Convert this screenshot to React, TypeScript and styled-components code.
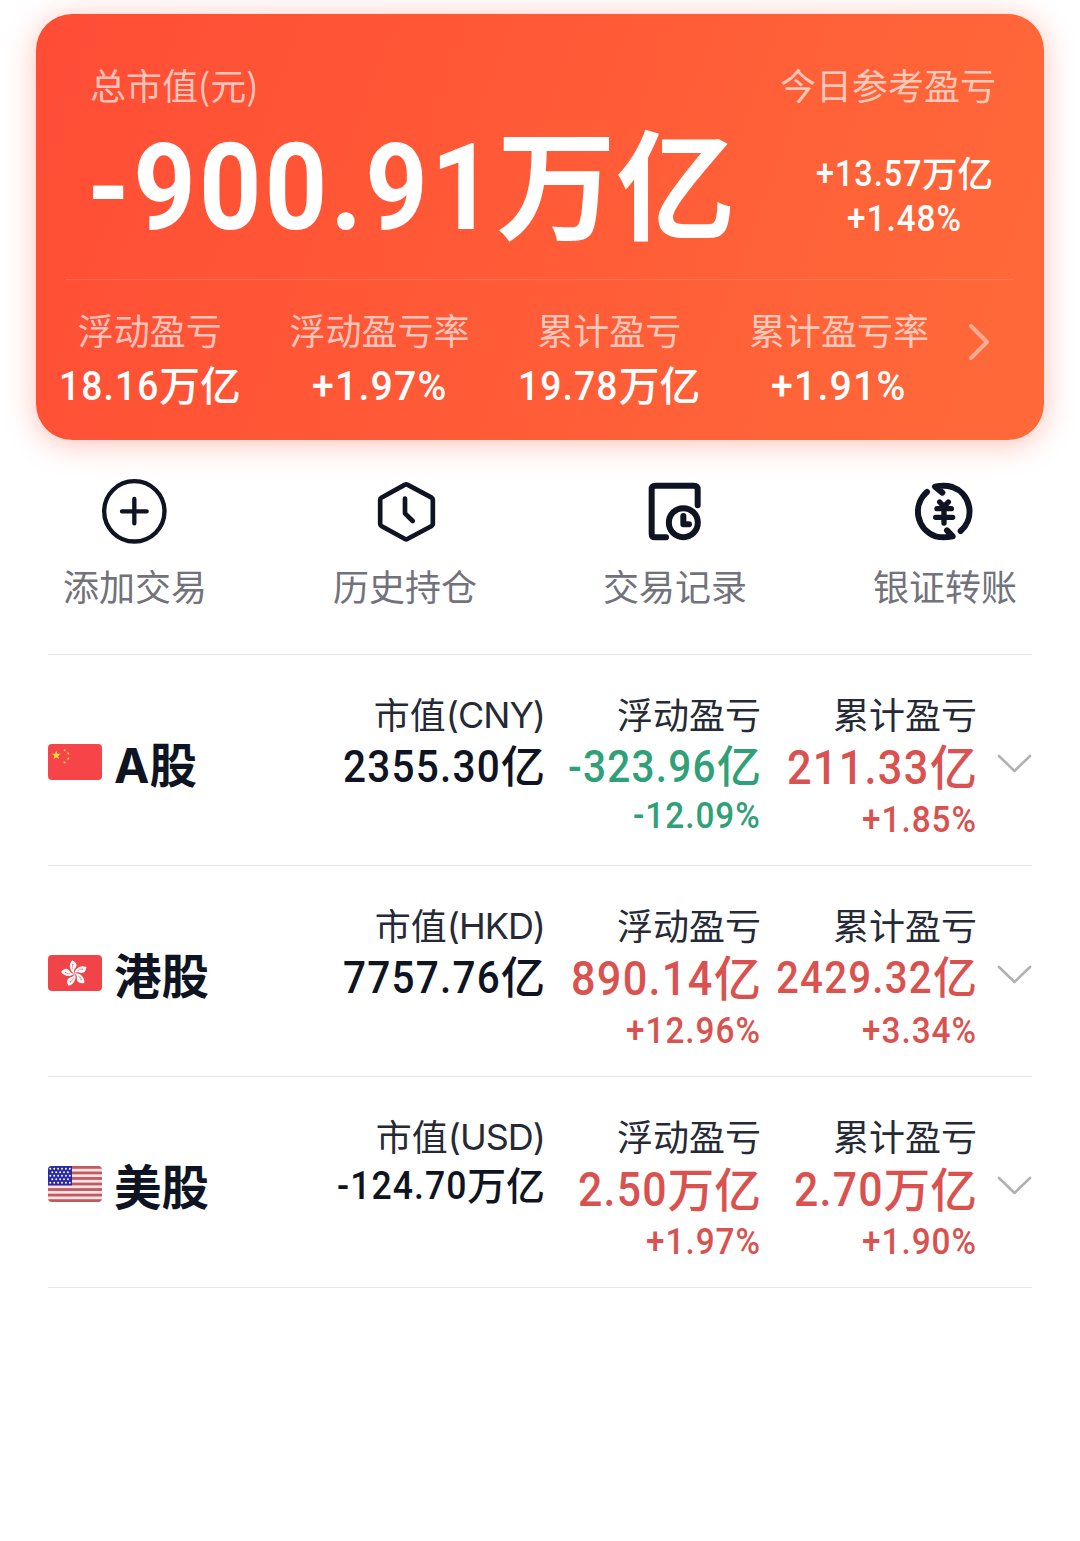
import React, { useLayoutEffect, useRef, useState } from "react";
import styled, { createGlobalStyle } from "styled-components";

const GlobalStyle = createGlobalStyle`
  * { box-sizing: border-box; }
  body {
    margin: 0;
    background: #fff;
    font-family: Roboto, "Noto Sans CJK SC", sans-serif;
    color: #0f1422;
  }
`;

const Page = styled.main`
  width: 1080px;
  min-height: 1541px;
  padding-top: 14px;
  background: #fff;
`;

const Card = styled.section`
  width: 1008px;
  height: 426px;
  margin: 0 36px;
  border-radius: 36px;
  background: linear-gradient(110deg, #ff4d35 0%, #ff5b37 50%, #ff6a39 100%);
  box-shadow: 0 4px 30px rgba(255, 84, 54, 0.36);
  color: #fff;
`;

const Summary = styled.div`
  display: flex;
  justify-content: space-between;
  height: 265px;
  padding: 48px 48px 0 54px;
`;

const Total = styled.div`
  display: flex;
  flex-direction: column;
`;

const TotalValue = styled.div`
  margin-left: -3px;
`;

const Today = styled.div`
  display: flex;
  flex-direction: column;
  align-items: flex-end;
`;

const TodayValues = styled.div`
  display: flex;
  flex-direction: column;
  align-items: center;
  padding: 46px 3px 0 0;
`;

const CardLabel = styled.div`
  font: 400 36px/44px "Noto Sans CJK SC", sans-serif;
  color: rgba(255, 255, 255, 0.66);
  white-space: nowrap;
`;

const FigureLine = styled.div<{ $size: number; $line: number; $weight: number; $color?: string }>`
  font-size: ${(p) => p.$size}px;
  line-height: ${(p) => p.$line}px;
  height: ${(p) => p.$line}px;
  font-weight: ${(p) => p.$weight};
  color: ${(p) => p.$color ?? "inherit"};
  white-space: nowrap;
`;

const Digits = styled.span<{ $squeeze: number }>`
  display: inline-block;
  letter-spacing: 0.03em;
  transform: scaleX(${(p) => p.$squeeze});
  transform-origin: left center;
`;

const Unit = styled.span`
  font-size: 0.985em;
  line-height: 0;
  vertical-align: -0.02em;
`;

type FigureProps = { text: string; size: number; line: number; weight?: number; color?: string; squeeze?: number };

const Figure = ({ text, size, line, weight = 500, color, squeeze = 0.9 }: FigureProps) => {
  const ref = useRef<HTMLSpanElement>(null);
  const [width, setWidth] = useState(0);
  useLayoutEffect(() => {
    if (ref.current) setWidth(ref.current.offsetWidth);
  }, [text, size]);
  const [, digits, unit] = text.match(/^([-+\d.%]+)(.*)$/)!;
  return (
    <FigureLine $size={size} $line={line} $weight={weight} $color={color}>
      <Digits ref={ref} $squeeze={squeeze} style={{ marginRight: -width * (1 - squeeze) }}>
        {digits}
      </Digits>
      {unit && <Unit>{unit}</Unit>}
    </FigureLine>
  );
};

const Rule = styled.div`
  height: 1px;
  margin: 0 30px;
  background: rgba(255, 255, 255, 0.16);
`;

const Stats = styled.div`
  display: grid;
  grid-template-columns: repeat(4, 229.7px) 1fr;
  margin-left: -1px;
  padding-top: 27px;
`;

const Stat = styled.div`
  display: flex;
  flex-direction: column;
  align-items: center;
`;

const More = styled.div`
  padding: 13px 0 0 11px;
`;

const Actions = styled.nav`
  display: grid;
  grid-template-columns: repeat(4, 1fr);
  height: 214px;
  padding-top: 30px;
`;

const Action = styled.div`
  display: flex;
  flex-direction: column;
  align-items: center;
  font: 400 36px/50px "Noto Sans CJK SC", sans-serif;
  color: #71727c;
`;

const Markets = styled.section`
  margin: 0 48px;
  border-top: 1px solid #e4e4e6;
`;

const Market = styled.article`
  display: grid;
  grid-template-columns: 240px 257px 216px 216px 55px;
  height: 211px;
  border-bottom: 1px solid #e4e4e6;
`;

const Name = styled.div`
  display: flex;
  align-items: center;
  gap: 12px;
  height: 36px;
  margin-top: 89px;
`;

const NameText = styled.span`
  padding-top: 8px;
  font: 700 47.5px/36px Inter, "Noto Sans CJK SC", sans-serif;
  white-space: nowrap;
`;

const Column = styled.div`
  display: flex;
  flex-direction: column;
  align-items: flex-end;
  padding-top: 39px;
`;

const ColumnLabel = styled.div`
  font: 400 36px/44px Inter, "Noto Sans CJK SC", sans-serif;
  height: 43px;
  color: #262a36;
  white-space: nowrap;
`;

const Currency = styled.span`
  line-height: 0;
  vertical-align: 1px;
  letter-spacing: -1px;
`;

const Expand = styled.div`
  padding: 98px 0 0 19px;
`;

const Svg = styled.svg`
  display: block;
  flex: none;
`;

const INK = "#0f1422";
const RED = "#d9524f";
const GREEN = "#2fa077";

const iconProps = {
  width: 110,
  height: 90,
  viewBox: "0 0 330 270",
  fill: "none",
  stroke: INK,
  strokeLinecap: "round" as const,
  strokeLinejoin: "round" as const,
};

const AddIcon = () => (
  <Svg {...iconProps} strokeWidth={13}>
    <circle cx="163" cy="124" r="90.5" />
    <path d="M163 87V160M126 124H200" />
  </Svg>
);

const HistoryIcon = () => (
  <Svg {...iconProps} strokeWidth={14}>
    <path d="M165 44Q168.500 42 172 44L245 83Q248.500 85 248.500 89V162Q248.500 166 245 168L172 207Q168.500 209 165 207L94 168Q90.500 166 90.500 162V89Q90.500 85 94 83Z" />
    <path d="M165 86V130L188 153" />
  </Svg>
);

const RecordIcon = () => (
  <Svg {...iconProps} strokeWidth={18}>
    <path d="M233 106V58Q233 47 222 47H106Q95 47 95 58V191Q95 202 106 202H138" />
    <circle cx="190" cy="158" r="43.500" />
    <path d="M190 138V163H207" />
  </Svg>
);

const TransferIcon = () => (
  <Svg {...iconProps} strokeWidth={18}>
    <path d="M111 66A78 78 0 0 0 137 199Q160 205 188 199L171 181" />
    <path d="M212 183A78 78 0 0 0 187 51Q163 44 135 50L157 68" />
    <path d="M149 96L162 110L175 96M162 111V159M141 116H184M137 142H188" strokeWidth="16" />
  </Svg>
);

const star = (cx: number, cy: number, r: number, turn = 0) =>
  Array.from({ length: 10 }, (_, i) => {
    const a = ((i * 36 - 90 + turn) * Math.PI) / 180;
    const d = i % 2 ? r * 0.4 : r;
    return `${(cx + d * Math.cos(a)).toFixed(2)},${(cy + d * Math.sin(a)).toFixed(2)}`;
  }).join(" ");

const FlagBox = styled.svg`
  display: block;
  flex: none;
  width: 54px;
  height: 36px;
  border-radius: 4px;
`;

const ChinaFlag = () => (
  <FlagBox viewBox="0 0 54 36">
    <rect width="54" height="36" fill="#f64448" />
    <g fill="#fcd436">
      <polygon points={star(8.3, 11.3, 4.9)} />
      <polygon points={star(16.7, 6.1, 1.7, 20)} />
      <polygon points={star(20.2, 9.5, 1.7, 40)} />
      <polygon points={star(20.2, 14.5, 1.7)} />
      <polygon points={star(16.7, 18.3, 1.7, 20)} />
    </g>
  </FlagBox>
);

const HongKongFlag = () => (
  <FlagBox viewBox="0 0 54 36">
    <rect width="54" height="36" fill="#f04448" />
    {[0, 72, 144, 216, 288].map((a) => (
      <g key={a} transform={`rotate(${a - 4} 26.500 18.500)`}>
        <path d="M26.500 18.500C22.300 16.500 20.500 9.500 25 5C28.700 7 30 9.500 28.600 12C27.300 14.300 25.300 15.200 26.500 18.500Z" fill="#fff" />
        <path d="M25.200 14.500Q23.900 12.500 25.400 9.500" fill="none" stroke="#f04448" strokeWidth="0.500" />
        <circle cx="25.500" cy="9.300" r="0.600" fill="#f04448" />
      </g>
    ))}
  </FlagBox>
);

const UsFlag = () => (
  <FlagBox viewBox="0 0 54 36">
    <rect width="54" height="36" fill="#fbe3e6" />
    {Array.from({ length: 7 }, (_, i) => (
      <rect key={i} y={(i * 72) / 13} width="54" height={36 / 13} fill="#c05a5d" />
    ))}
    <rect width="24" height="19.400" fill="#2a2aa5" />
    <g fill="#fff">
      {[0, 1, 2, 3, 4].flatMap((row) =>
        Array.from({ length: row % 2 ? 5 : 6 }, (_, i) => (
          <circle key={`${row}-${i}`} cx={(row % 2 ? 4.3 : 2.3) + i * 3.9} cy={2.8 + row * 3.5} r="0.950" />
        ))
      )}
    </g>
  </FlagBox>
);

type Value = { text: string; size: number; line: number; color?: string; pct?: string; pctLine?: number };
type MarketRow = { name: string; flag: React.ReactNode; currency: string; value: Value; floating: Value; total: Value };

const markets: MarketRow[] = [
  {
    name: "A股",
    flag: <ChinaFlag />,
    currency: "CNY",
    value: { text: "2355.30亿", size: 45, line: 59 },
    floating: { text: "-323.96亿", size: 45, line: 59, color: GREEN, pct: "-12.09%", pctLine: 40 },
    total: { text: "211.33亿", size: 48, line: 62, color: RED, pct: "+1.85%" },
  },
  {
    name: "港股",
    flag: <HongKongFlag />,
    currency: "HKD",
    value: { text: "7757.76亿", size: 45, line: 59 },
    floating: { text: "890.14亿", size: 48, line: 62, color: RED, pct: "+12.96%" },
    total: { text: "2429.32亿", size: 44.7, line: 60, color: RED, pct: "+3.34%", pctLine: 46 },
  },
  {
    name: "美股",
    flag: <UsFlag />,
    currency: "USD",
    value: { text: "-124.70万亿", size: 39.5, line: 53 },
    floating: { text: "2.50万亿", size: 47.5, line: 62, color: RED, pct: "+1.97%" },
    total: { text: "2.70万亿", size: 47.5, line: 62, color: RED, pct: "+1.90%" },
  },
];

const stats = [
  { label: "浮动盈亏", value: "18.16万亿" },
  { label: "浮动盈亏率", value: "+1.97%", squeeze: 0.95 },
  { label: "累计盈亏", value: "19.78万亿" },
  { label: "累计盈亏率", value: "+1.91%", squeeze: 0.95 },
];

const actions = [
  { label: "添加交易", icon: <AddIcon /> },
  { label: "历史持仓", icon: <HistoryIcon /> },
  { label: "交易记录", icon: <RecordIcon /> },
  { label: "银证转账", icon: <TransferIcon /> },
];

const ValueColumn = ({ label, value }: { label: React.ReactNode; value: Value }) => (
  <Column>
    <ColumnLabel>{label}</ColumnLabel>
    <Figure text={value.text} size={value.size} line={value.line} color={value.color} />
    {value.pct && (
      <Figure text={value.pct} size={36} line={value.pctLine ?? 42} color={value.color} squeeze={0.925} />
    )}
  </Column>
);

export default function App() {
  return (
    <Page>
      <GlobalStyle />
      <Card>
        <Summary>
          <Total>
            <CardLabel>总市值(元)</CardLabel>
            <TotalValue>
              <Figure text="-900.91万亿" size={121} line={164} weight={700} />
            </TotalValue>
          </Total>
          <Today>
            <CardLabel>今日参考盈亏</CardLabel>
            <TodayValues>
              <Figure text="+13.57万亿" size={36} line={45} />
              <Figure text="+1.48%" size={36} line={45} squeeze={0.925} />
            </TodayValues>
          </Today>
        </Summary>
        <Rule />
        <Stats>
          {stats.map((s) => (
            <Stat key={s.label}>
              <CardLabel>{s.label}</CardLabel>
              <Figure text={s.value} size={41.3} line={70} squeeze={s.squeeze} />
            </Stat>
          ))}
          <More>
            <Svg width="28" height="44" viewBox="0 0 28 44" fill="none" stroke="rgba(255,255,255,.45)" strokeWidth="4" strokeLinecap="round" strokeLinejoin="round">
              <path d="M6 6L22 22L6 38" />
            </Svg>
          </More>
        </Stats>
      </Card>
      <Actions>
        {actions.map((a) => (
          <Action key={a.label}>
            {a.icon}
            {a.label}
          </Action>
        ))}
      </Actions>
      <Markets>
        {markets.map((m) => (
          <Market key={m.name}>
            <Name>
              {m.flag}
              <NameText>{m.name}</NameText>
            </Name>
            <ValueColumn
              label={
                <>
                  市值<Currency>({m.currency})</Currency>
                </>
              }
              value={m.value}
            />
            <ValueColumn label="浮动盈亏" value={m.floating} />
            <ValueColumn label="累计盈亏" value={m.total} />
            <Expand>
              <Svg width="36" height="22" viewBox="0 0 36 22" fill="none" stroke="#b1b1b3" strokeWidth="2.6" strokeLinecap="round" strokeLinejoin="round">
                <path d="M3 3L18.500 18L34 3" />
              </Svg>
            </Expand>
          </Market>
        ))}
      </Markets>
    </Page>
  );
}
